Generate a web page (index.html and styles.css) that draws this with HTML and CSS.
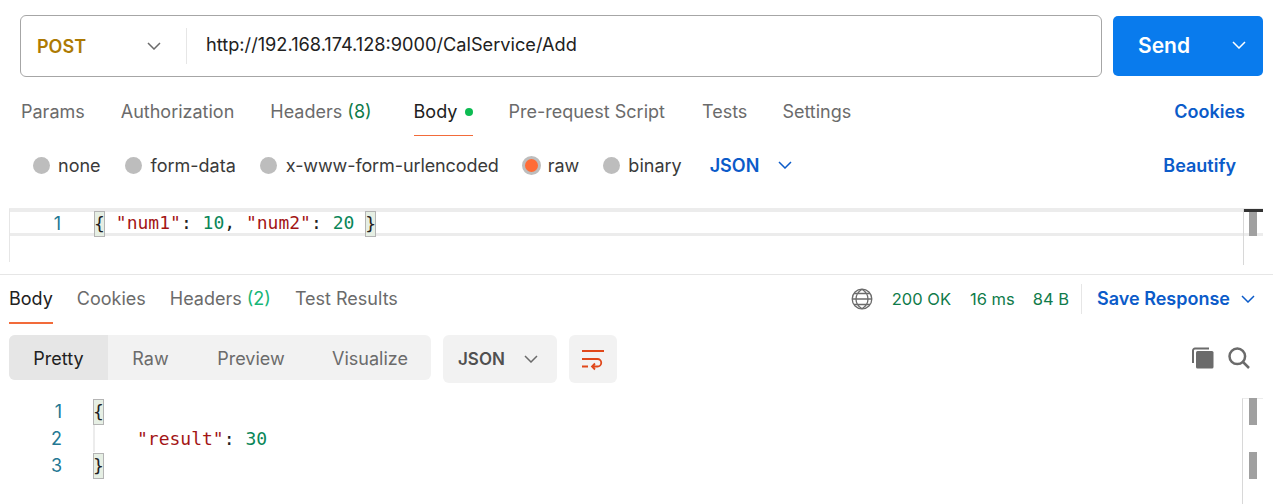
FILE: index.html
```html
<!DOCTYPE html>
<html lang="en">
<head>
<meta charset="utf-8">
<title>POST request</title>
<link rel="stylesheet" href="styles.css">
</head>
<body>
<section class="request">
  <div class="url-box">
    <div class="method"><span class="method-name">POST</span>
      <svg class="chev chev-grey" viewBox="0 0 14 8"><path d="M1 1l6 6 6-6"/></svg>
    </div>
    <div class="url">http://192.168.174.128:9000/CalService/Add</div>
  </div>
  <div class="send"><span>Send</span>
    <svg class="chev chev-white" viewBox="0 0 14 8"><path d="M1 1l6 6 6-6"/></svg>
  </div>
</section>

<nav class="req-tabs">
  <span class="tab tab-params">Params</span>
  <span class="tab tab-auth">Authorization</span>
  <span class="tab tab-headers">Headers <em class="count">(8)</em></span>
  <span class="tab tab-body active">Body <i class="dot"></i></span>
  <span class="tab tab-pre">Pre-request Script</span>
  <span class="tab tab-tests">Tests</span>
  <span class="tab">Settings</span>
  <span class="link cookies">Cookies</span>
</nav>

<div class="options">
  <span class="opt opt-none"><i class="radio"></i>none</span>
  <span class="opt opt-form"><i class="radio"></i>form-data</span>
  <span class="opt opt-url"><i class="radio"></i>x-www-form-urlencoded</span>
  <span class="opt opt-raw"><i class="radio on"></i>raw</span>
  <span class="opt opt-bin"><i class="radio"></i>binary</span>
  <span class="link json">JSON <svg class="chev chev-blue" viewBox="0 0 14 8"><path d="M1 1l6 6 6-6"/></svg></span>
  <span class="link beautify">Beautify</span>
</div>

<div class="editor">
  <div class="active-line"><span class="ln">1</span><span class="code"><b class="brace">{</b> <span class="k">"num1"</span>: <span class="n">10</span>, <span class="k">"num2"</span>: <span class="n">20</span> <b class="brace">}</b></span></div>
  <div class="sb-head"></div>
  <div class="sb-thumb"></div>
</div>

<div class="res-head">
  <span class="tab active res-body">Body</span>
  <span class="tab res-cookies">Cookies</span>
  <span class="tab res-headers">Headers <em class="count light">(2)</em></span>
  <span class="tab">Test Results</span>
  <div class="status">
    <svg class="globe" viewBox="0 0 22 22"><circle cx="11" cy="11" r="9.8"/><path d="M3 5.5h16M3 16.5h16M1.2 11h19.6M11 1.2c-8 5-8 14.600 0 19.600M11 1.200c8 5 8 14.600 0 19.600"/></svg>
    <span class="stat s1">200 OK</span>
    <span class="stat s2">16 ms</span>
    <span class="stat s3">84 B</span>
    <span class="save link">Save Response <svg class="chev chev-blue" viewBox="0 0 14 8"><path d="M1 1l6 6 6-6"/></svg></span>
  </div>
</div>

<div class="toolbar">
  <div class="seg">
    <span class="seg-item on">Pretty</span>
    <span class="seg-item i-raw">Raw</span>
    <span class="seg-item i-prev">Preview</span>
    <span class="seg-item i-vis">Visualize</span>
  </div>
  <div class="fmt">JSON <svg class="chev chev-grey" viewBox="0 0 14 8"><path d="M1 1l6 6 6-6"/></svg></div>
  <div class="wrap"><svg viewBox="0 0 24 20"><path d="M1 2h22M1 10h15.500a3.700 3.700 0 0 1 0 7.500H11M14 14.500l-3 3 3 3M1 17.500h6"/></svg></div>
  <div class="tools">
    <svg class="copy" viewBox="0 0 22 22"><path class="back" d="M17 1.500H3a2 2 0 0 0-2 2V16"/><rect x="4" y="4" width="17.500" height="17.500" rx="1.500"/></svg>
    <svg class="search" viewBox="0 0 22 22"><circle cx="9.300" cy="9.300" r="7.800"/><path d="M15 15l6 6"/></svg>
  </div>
</div>

<div class="output">
  <div class="row"><span class="ln">1</span><span class="code"><b class="brace">{</b></span></div>
  <div class="row"><span class="ln">2</span><span class="code indent"><span class="k">"result"</span>: <span class="n">30</span></span></div>
  <div class="row"><span class="ln">3</span><span class="code"><b class="brace">}</b></span></div>
  <div class="guide"></div>
  <div class="out-rail"></div>
  <div class="out-mark m1"></div>
  <div class="out-mark m2"></div>
</div>
</body>
</html>
```

FILE: styles.css
```css
* { box-sizing: border-box; }
html, body { margin: 0; padding: 0; }
body {
  width: 1273px;
  height: 504px;
  overflow: hidden;
  background: #fff;
  font-family: Inter, "Noto Sans", sans-serif;
  font-size: 18px;
  color: #212121;
}
em, i { font-style: normal; }
svg { display: block; }
.chev { fill: none; stroke-width: 1.5; width: 14px; height: 8px; }
.chev-grey { stroke: #6b6b6b; }
.chev-white { stroke: #fff; }
.chev-blue { stroke: #0b5bc9; }

.request { display: flex; gap: 11px; padding: 15px 10px 0 20px; height: 77px; }
.url-box {
  flex: 1; height: 62px; display: flex; align-items: center;
  border: 1px solid #a6a6a6; border-radius: 6px;
}
.method {
  width: 166px; height: 36px; padding: 0 25px 0 16px; display: flex;
  align-items: center; justify-content: space-between;
  border-right: 1px solid #e6e6e6;
}
.method-name { color: #ad7a03; font-weight: 600; font-size: 18px; }
.url { padding: 0 0 4px 19px; color: #212121; font-size: 18.200px; }
.send {
  width: 150px; height: 60px; margin-top: 1px; border-radius: 5px;
  background: #097bed; color: #fff; font-weight: 600; font-size: 21px;
  display: flex; align-items: center; justify-content: space-between;
  padding: 0 17px 2px 25px;
}

.req-tabs { display: flex; align-items: center; height: 68px; padding: 0 28px 0 21px; }
.tab { color: #6b6b6b; white-space: nowrap; }
.tab-params { margin-right: 36px; }
.tab-auth { margin-right: 36px; }
.tab-headers { margin-right: 42px; }
.tab-body { margin-right: 35px; }
.tab-pre { margin-right: 37px; }
.tab-tests { margin-right: 35px; }
.tab.active { color: #212121; position: relative; }
.tab.active::after {
  content: ""; position: absolute; left: 0; right: 0; top: 34px; height: 1.500px; background: #f26b3a;
}
.count { color: #0f7b4a; }
.count.light { color: #17b678; }
.dot { display: inline-block; width: 8px; height: 8px; border-radius: 50%; background: #0cbb52; vertical-align: 2px; margin-left: 3px; }
.link { color: #0b5bc9; font-weight: 600; }
.cookies { margin-left: auto; }

.options { display: flex; align-items: center; height: 40px; padding: 0 37px 0 33px; }
.opt { display: flex; align-items: center; gap: 8px; color: #3a3a3a; white-space: nowrap; }
.opt-none, .opt-raw { margin-right: 24px; }
.opt-form { margin-right: 24px; gap: 9px; }
.opt-url { margin-right: 24px; gap: 9px; letter-spacing: -0.100px; }
.opt-bin { margin-right: 28px; }
.radio { width: 17px; height: 17px; border-radius: 50%; background: #bdbdbd; display: block; }
.radio.on { background: #ff6c37; border: 3px solid #bdbdbd; width: 19px; height: 19px; margin-left: -1px; margin-right: -1px; }
.json { display: flex; align-items: center; gap: 19px; }
.beautify { margin-left: auto; }

.editor {
  position: relative; height: 66px; margin: 23px 10px 0 9px;
  font-family: "DejaVu Sans Mono", "Liberation Mono", monospace;
}
.active-line {
  display: flex; height: 28px; padding-top: 2px; align-items: center;
  border-top: 4px solid #ececec; border-bottom: 3px solid #ececec;
}
.editor::before {
  content: ""; position: absolute; left: 0; top: 1px; height: 53px; width: 1px; background: #e6e6e6;
}
.ln { width: 85px; padding-right: 33px; text-align: right; color: #237893; flex: none; font-family: Inter, sans-serif; font-size: 18px; }
.code { white-space: pre; color: #212121; font-size: 18px; }
.brace { display: inline-block; width: 11px; height: 26px; font-weight: 400; background: #e6efe4; outline: 1px solid #b4b4b4; outline-offset: -1px; text-align: center; line-height: 26px; vertical-align: middle; }
.k { color: #a31515; }
.n { color: #098658; }
.sb-head { position: absolute; left: 1234px; top: 1px; width: 20px; height: 3px; background: #333; }
.sb-thumb { position: absolute; left: 1240px; top: 4px; width: 8px; height: 24px; background: #a0a0a0; }
.editor::after {
  content: ""; position: absolute; left: 1234px; top: 1px; height: 56px; width: 1px; background: #d8d8d8;
}

.res-head {
  display: flex; align-items: center; height: 50px; padding: 0 18px 2px 9px;
  border-top: 1px solid #e6e6e6;
}
.res-body { margin-right: 24px; }
.res-cookies { margin-right: 24px; }
.res-headers { margin-right: 24px; }
.status { margin-left: auto; display: flex; align-items: center; color: #0f7b4a; font-size: 16.500px; }
.globe { width: 22px; height: 22px; fill: none; stroke: #6b6b6b; stroke-width: 1.300; margin-right: 19px; }
.stat { white-space: nowrap; }
.s1 { margin-right: 19px; }
.s2 { margin-right: 18px; }
.s3 { padding-right: 12px; border-right: 1px solid #e6e6e6; height: 30px; line-height: 30px; margin-right: 15px; }
.save { display: flex; align-items: center; gap: 11px; font-size: 18px; }

.toolbar { display: flex; align-items: flex-start; gap: 12px; height: 61px; padding: 11px 0 0 9px; }
.seg { display: flex; width: 422px; height: 45px; background: #f2f2f2; border-radius: 6px; overflow: hidden; align-items: stretch; color: #6b6b6b; }
.seg-item { display: flex; align-items: center; justify-content: center; padding-top: 1px; }
.seg-item.on { width: 99px; background: #e6e6e6; color: #212121; }
.i-raw { width: 85px; }
.i-prev { width: 116px; }
.i-vis { width: 122px; }
.fmt { width: 114px; height: 48px; background: #f2f2f2; border-radius: 6px; display: flex; align-items: center; justify-content: space-between; padding: 0 19px 0 15px; font-weight: 600; color: #505050; font-size: 17px; }
.wrap { width: 48px; height: 48px; background: #f2f2f2; border-radius: 6px; display: flex; align-items: center; justify-content: center; }
.wrap svg { width: 24px; height: 20px; fill: none; stroke: #e0481b; stroke-width: 1.800; overflow: visible; }
.tools { margin-left: auto; display: flex; gap: 14px; padding: 12px 23px 0 0; }
.copy { width: 22px; height: 22px; }
.copy rect { fill: #6b6b6b; }
.copy .back { fill: none; stroke: #6b6b6b; stroke-width: 2; }
.search { width: 22px; height: 22px; fill: none; stroke: #6b6b6b; stroke-width: 2.500; }

.output { position: relative; font-family: "DejaVu Sans Mono", monospace; margin-top: 13px; height: 106px; }
.row { display: flex; height: 27px; align-items: center; }
.row .ln { width: 93px; padding-right: 31px; }
.indent { padding-left: 44px; }
.guide { position: absolute; left: 93px; top: 27px; width: 2px; height: 27px; background: #ececec; }
.out-rail { position: absolute; left: 1242px; top: 0; width: 21px; height: 106px; border-left: 1px solid #d8d8d8; border-top: 1px solid #ececec; }
.out-mark { position: absolute; left: 1249px; width: 8px; height: 27px; background: #a0a0a0; }
.m1 { top: 0; }
.m2 { top: 54px; }
```
